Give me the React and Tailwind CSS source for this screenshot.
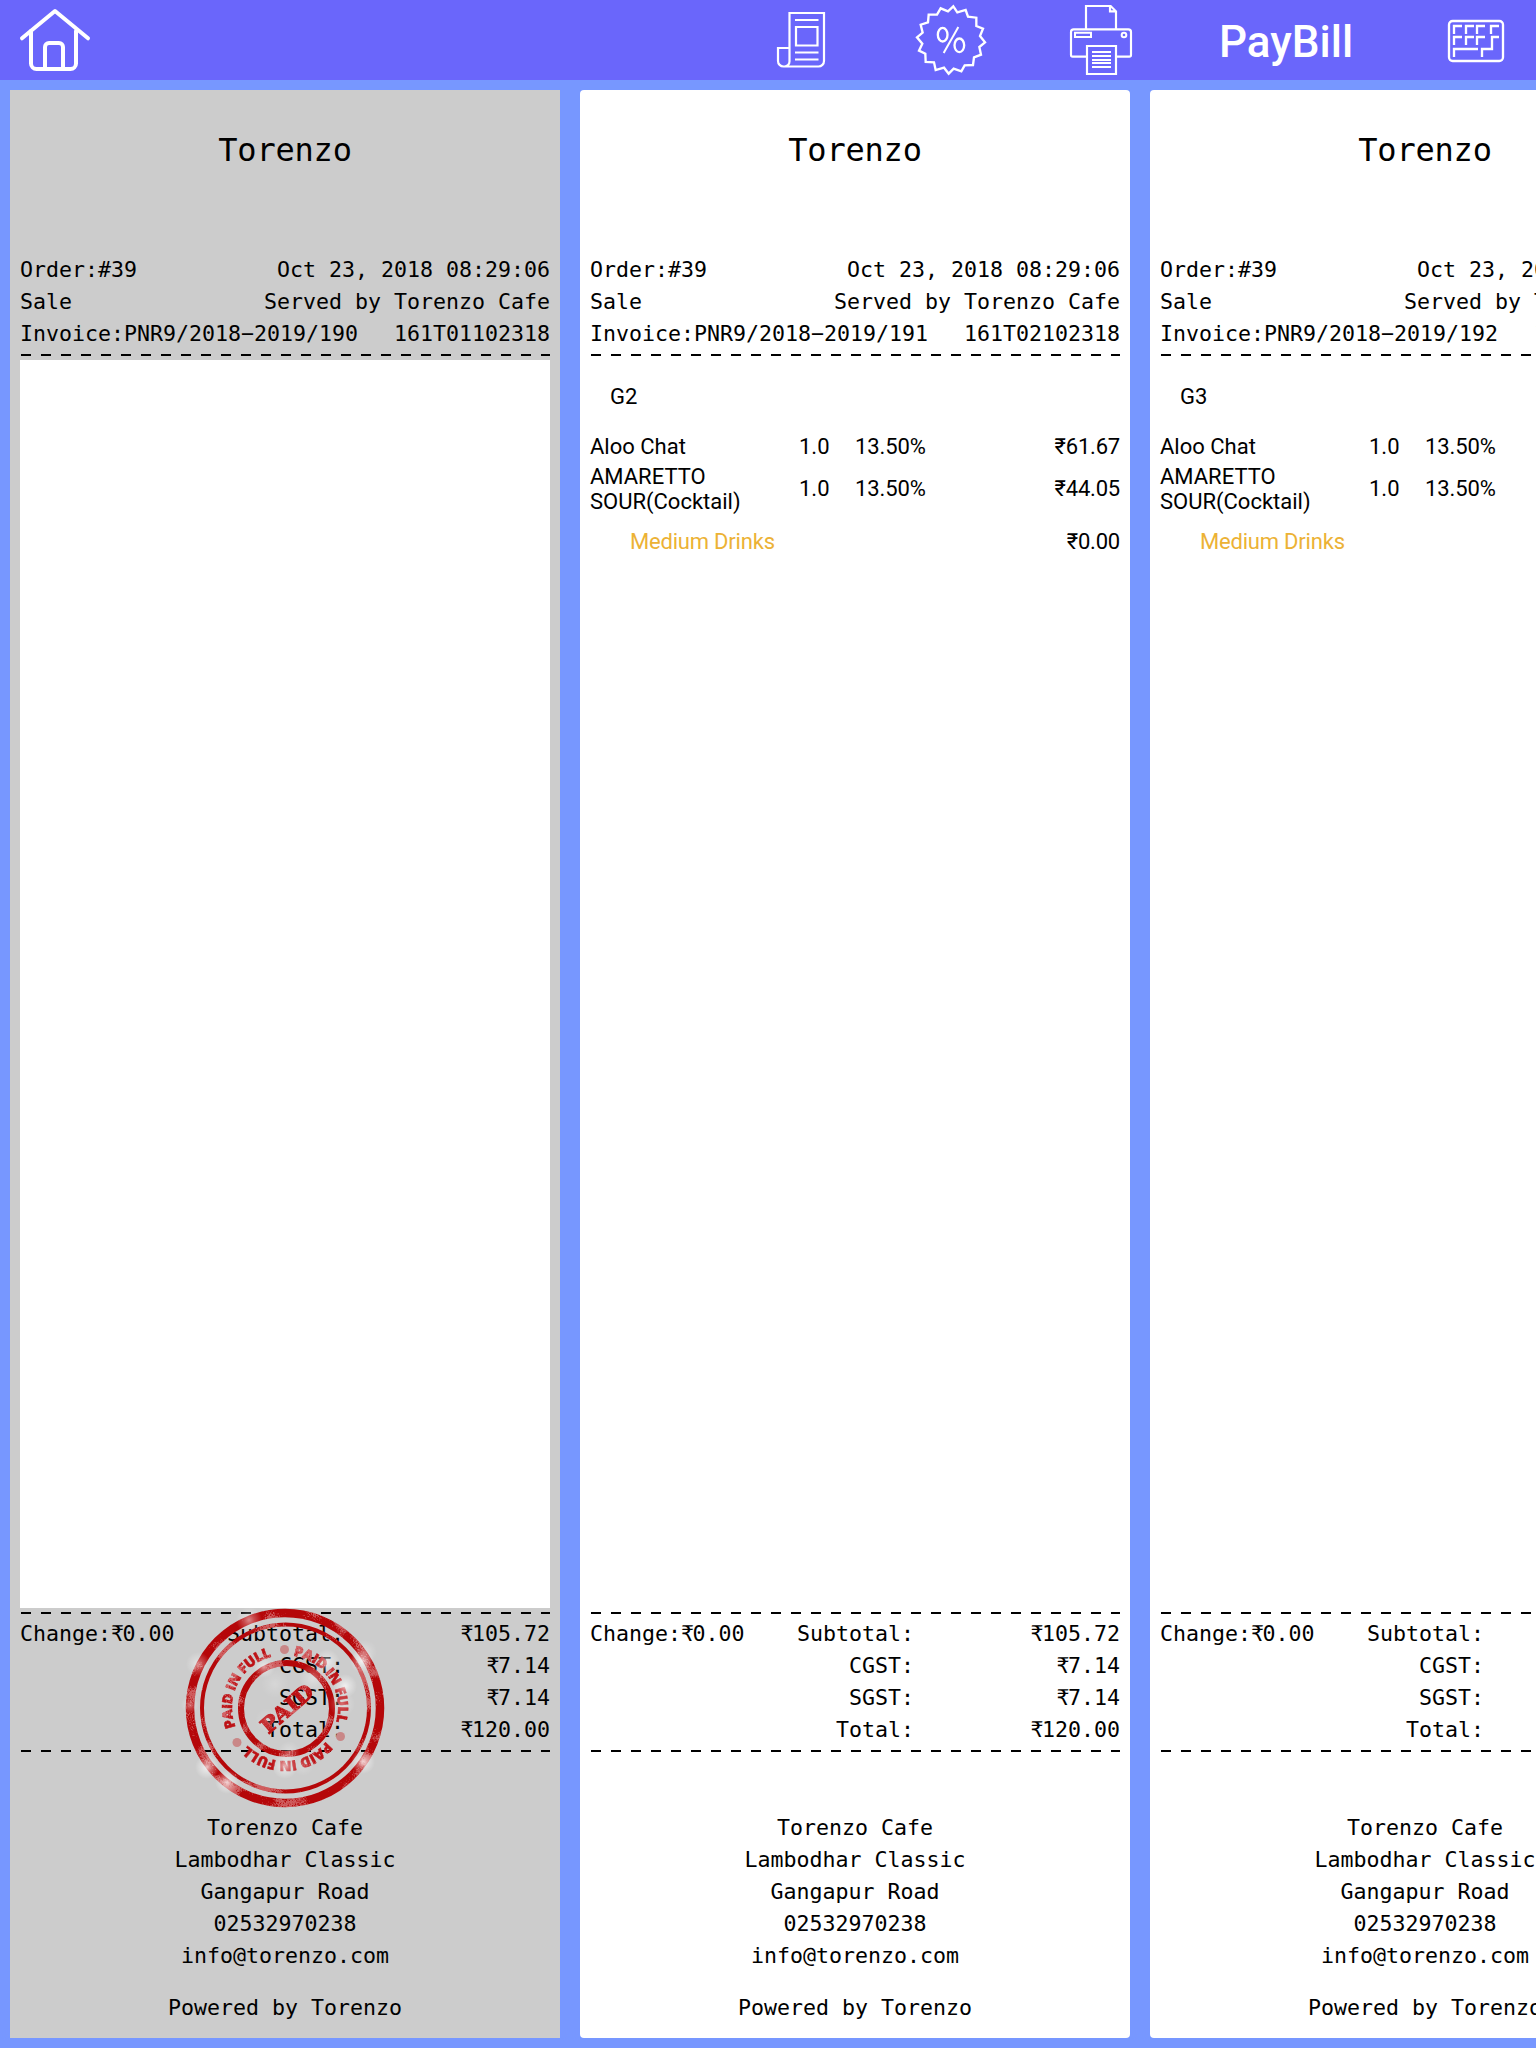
import React from "react";

const MONO = "font-['DejaVu_Sans_Mono',monospace]";

const receipts = [
  { invoice: "190", token: "161T01102318", paid: true },
  { invoice: "191", token: "161T02102318", guest: "G2" },
  { invoice: "192", token: "161T03102318", guest: "G3" },
];

const totals = [
  ["Subtotal:", "105.72"],
  ["CGST:", "7.14"],
  ["SGST:", "7.14"],
  ["Total:", "120.00"],
];

const footer = ["Torenzo Cafe", "Lambodhar Classic", "Gangapur Road", "02532970238", "info@torenzo.com"];

function HomeIcon() {
  return (
    <svg className="ml-[18px] h-[72px] w-[74px]" viewBox="18 4 74 72" fill="none" stroke="#fff" strokeWidth="4" strokeLinecap="round" strokeLinejoin="round">
      <path d="M22 38.3 55 11l33 27.3" />
      <path d="M31 31v32.5a5.5 5.5 0 0 0 5.5 5.5h34a5.5 5.5 0 0 0 5.5-5.5V31" />
      <path d="M45 68V47a4 4 0 0 1 4-4h10a4 4 0 0 1 4 4v21" strokeLinecap="butt" />
    </svg>
  );
}

function ReceiptIcon() {
  return (
    <svg className="h-[60px] w-[50px]" viewBox="776 10 50 60" fill="none" stroke="#fff" strokeWidth="2.2">
      <path d="M789.5 48V13H824v48a5.500 5.500 0 0 1-5.500 5.500H783.500a5.500 5.500 0 0 1-5.500-5.500V48h11.500v13.500a5 5 0 0 1-5 5" />
      <path d="M795 20h23.500M796 27h21.500v18.500H796zM795 52.500h23.500M795 59.500h23.500" />
    </svg>
  );
}

function PercentIcon() {
  return (
    <svg className="ml-[86px] h-[80px] w-[80px]" viewBox="0 0 240 240" fill="none" stroke="#fff" strokeWidth="7">
      <path d="M124 19 136 37 161 30 168 50 193 53 193 78 213 86 204 108 219 127 202 141 207 164 186 172 183 195 158 196 148 214 125 206 110 221 96 203 71 210 66 187 41 186 40 161 21 152 31 131 15 112 32 98 26 74 48 67 50 44 75 44 86 25 108 34Z" />
      <ellipse cx="92" cy="104" rx="14.500" ry="20.500" />
      <ellipse cx="142" cy="136" rx="14.500" ry="20.500" />
      <path d="M139 81 95 159" strokeWidth="6" />
    </svg>
  );
}

function PrinterIcon() {
  return (
    <svg className="ml-[74px] h-[80px] w-[72px]" viewBox="0 0 216 240" fill="none" stroke="#fff" strokeWidth="6.5">
      <path d="M60 87V18H134L150 34V87M132 18V34H150" />
      <path d="M60 170H20Q15 170 15 165V96Q15 88 23 88H187Q195 88 195 96V165Q195 170 190 170H152" />
      <path d="M27 98H75V111H27Z" strokeWidth="6" />
      <circle cx="174" cy="105" r="7" strokeWidth="6" />
      <path d="M63 138H150V222H63Z" />
      <path d="M78 156H135M78 168H135M78 180H135M78 189H135M78 201H135" strokeWidth="6" />
    </svg>
  );
}

function KeyboardIcon() {
  return (
    <svg className="ml-[92px] h-[50px] w-[64px]" viewBox="0 0 192 150" fill="none" stroke="#fff" strokeWidth="7">
      <rect x="15" y="18" width="162" height="120" rx="11" />
      <path d="M30 57V33H54M66 57V33H90M99 57V33H123M141 57V33H165M30 90V66H54M66 90V66H90M99 90V66H123M30 126V102H102M165 66H144V102H114V126" />
    </svg>
  );
}

function Splash({ x, y, r, o }) {
  return <circle cx={x} cy={y} r={r} fill="url(#splash)" opacity={o} />;
}

function Stamp() {
  return (
    <svg className="absolute top-[1513px] left-[170px] h-[210px] w-[210px]" viewBox="-105 -105 210 210">
      <defs>
        <radialGradient id="splash">
          <stop offset="0" stopColor="#fff" stopOpacity="0.85" />
          <stop offset="0.4" stopColor="#fff" stopOpacity="0.45" />
          <stop offset="1" stopColor="#fff" stopOpacity="0" />
        </radialGradient>
        <filter id="worn" x="-5%" y="-5%" width="110%" height="110%" colorInterpolationFilters="sRGB">
          <feTurbulence type="fractalNoise" baseFrequency="0.045" numOctaves="2" seed="8" result="patch" />
          <feTurbulence type="fractalNoise" baseFrequency="0.7" numOctaves="2" seed="3" result="grain" />
          <feComposite in="patch" in2="grain" operator="arithmetic" k1="0" k2="0.7" k3="0.3" k4="0" result="mix" />
          <feColorMatrix in="mix" type="matrix" values="0 0 0 0 1  0 0 0 0 1  0 0 0 0 1  9 0 0 0 -4.7" result="white" />
          <feComponentTransfer in="white" result="soft">
            <feFuncA type="linear" slope="0.35" />
          </feComponentTransfer>
          <feComposite in="soft" in2="SourceGraphic" operator="in" result="spots" />
          <feMerge>
            <feMergeNode in="SourceGraphic" />
            <feMergeNode in="spots" />
          </feMerge>
        </filter>
        <path id="ring" d="M0 -53A53 53 0 0 1 0 53A53 53 0 0 1 0 -53" />
      </defs>
      <g filter="url(#worn)">
        <g fill="none" stroke="#b50709">
          <circle r="95" strokeWidth="8.500" />
          <circle cx="0.500" r="83.500" strokeWidth="4" />
          <circle cx="1.500" cy="0.500" r="45.500" strokeWidth="6" />
        </g>
        {[9, 129, 249].map((angle) => (
          <text key={angle} transform={`rotate(${angle})`} fill="#bd1216" stroke="#bd1216" strokeWidth="0.500" fontSize="14" className="font-['Open_Sans',sans-serif] font-extrabold">
            <textPath href="#ring" textLength="89">PAID IN FULL</textPath>
          </text>
        ))}
        <text transform="translate(2 0.500) rotate(-41)" y="7.500" textAnchor="middle" textLength="62" lengthAdjust="spacingAndGlyphs" fontSize="21" fill="#bd1216" stroke="#bd1216" strokeWidth="1.200" className="font-['DejaVu_Serif',serif] font-bold">
          PAID
        </text>
      </g>
      <g fill="#c98787">
        <circle cx="-0.500" cy="-58.500" r="4.500" />
        <circle cx="55.500" cy="28.500" r="4.500" />
        <circle cx="-48" cy="34.500" r="4.500" />
      </g>
      <Splash x={-36} y={-88} r={13} o={0.6} />
      <Splash x={-87} y={-44} r={12} o={0.6} />
      <Splash x={77} y={-47} r={12} o={0.9} />
      <Splash x={80} y={-56} r={12} o={0.4} />
      <Splash x={42} y={-46} r={13} o={0.7} />
      <Splash x={28} y={-30} r={14} o={0.45} />
      <Splash x={60} y={-22} r={12} o={0.85} />
      <Splash x={57} y={-4} r={13} o={0.45} />
      <Splash x={-21} y={-41} r={11} o={0.7} />
      <Splash x={-10} y={-24} r={14} o={0.25} />
      <Splash x={-78} y={59} r={12} o={0.9} />
      <Splash x={-58} y={74} r={12} o={0.9} />
      <Splash x={78} y={54} r={12} o={0.9} />
      <Splash x={0} y={58} r={13} o={0.8} />
      <Splash x={18} y={57} r={11} o={0.3} />
      <Splash x={4} y={44} r={11} o={0.4} />
      <Splash x={-18} y={12} r={12} o={0.25} />
      <Splash x={-95} y={-3} r={9} o={0.5} />
    </svg>
  );
}

function Dashes() {
  return <div className="ml-px h-[2px] bg-[repeating-linear-gradient(90deg,#000_0_10px,transparent_10px_20px)]" />;
}

function Rupees({ amount }) {
  return (
    <>
      <span className="tracking-[-1.5px]">₹</span>
      {amount}
    </>
  );
}

function Row({ left, right }) {
  return (
    <div className="flex justify-between">
      <span>{left}</span>
      <span>{right}</span>
    </div>
  );
}

function Item({ name, price }) {
  return (
    <div className="flex items-center">
      <span className="w-[209px] leading-[25px]">{name}</span>
      <span className="w-[56px] leading-[24px]">1.0</span>
      <span className="flex-1 leading-[24px] tracking-[-0.1px]">13.50%</span>
      <span className="leading-[24px] tracking-[-0.2px]">{price}</span>
    </div>
  );
}

function Receipt({ invoice, token, guest, paid }) {
  return (
    <section className={`relative flex h-[1948px] w-[550px] shrink-0 flex-col px-[10px] text-[21.6px] leading-[32px] whitespace-pre text-black ${MONO} ${paid ? "bg-[#cccccc]" : "rounded-[4px] bg-white"}`}>
      <h1 className="mt-[40px] text-center text-[32px] leading-[40px] tracking-[-0.2px]">Torenzo</h1>
      <div className="mt-[84px] h-[100px]">
        <Row left="Order:#39" right="Oct 23, 2018 08:29:06" />
        <Row left="Sale" right="Served by Torenzo Cafe" />
        <Row left={`Invoice:PNR9/2018−2019/${invoice}`} right={token} />
      </div>
      <Dashes />
      <div className="mt-[4px] h-[1248px] bg-white font-[Roboto,sans-serif] text-[22px] leading-[25px]">
        {guest && (
          <>
            <div className="mt-[24px] pl-[20px]">{guest}</div>
            <div className="mt-[25px]">
              <Item name="Aloo Chat" price="₹61.67" />
              <div className="h-[5px]" />
              <Item name={"AMARETTO\nSOUR(Cocktail)"} price="₹44.05" />
            </div>
            <div className="mt-[15px] flex justify-between pl-[40px] tracking-[-0.2px]">
              <span className="text-[#ecb235]">Medium Drinks</span>
              <span>₹0.00</span>
            </div>
          </>
        )}
      </div>
      <div className="mt-[4px]">
        <Dashes />
      </div>
      <div className="mt-[4px] flex h-[132px]">
        <div className="w-[160px]">Change:<Rupees amount="0.00" /></div>
        <div className="w-[164px] text-right">
          {totals.map(([label]) => <div key={label}>{label}</div>)}
        </div>
        <div className="flex-1 text-right">
          {totals.map(([label, amount]) => <div key={label}><Rupees amount={amount} /></div>)}
        </div>
      </div>
      <Dashes />
      <div className="mt-[60px] text-center">
        {footer.map((line) => <div key={line}>{line}</div>)}
        <div className="mt-[20px]">Powered by Torenzo</div>
      </div>
      {paid && <Stamp />}
    </section>
  );
}

export default function App() {
  return (
    <div className="h-[2048px] w-[1536px] overflow-hidden bg-[#7797ff]">
      <header className="flex h-[80px] items-center bg-[#6a66fb]">
        <HomeIcon />
        <div className="ml-[684px] flex items-center">
          <ReceiptIcon />
          <PercentIcon />
          <PrinterIcon />
          <span className="mt-[4px] ml-[81px] w-[133px] font-[Roboto,sans-serif] text-[44px] leading-[52px] font-medium text-white">PayBill</span>
          <KeyboardIcon />
        </div>
      </header>
      <main className="flex gap-[20px] pt-[10px] pl-[10px]">
        {receipts.map((r) => <Receipt key={r.invoice} {...r} />)}
      </main>
    </div>
  );
}
